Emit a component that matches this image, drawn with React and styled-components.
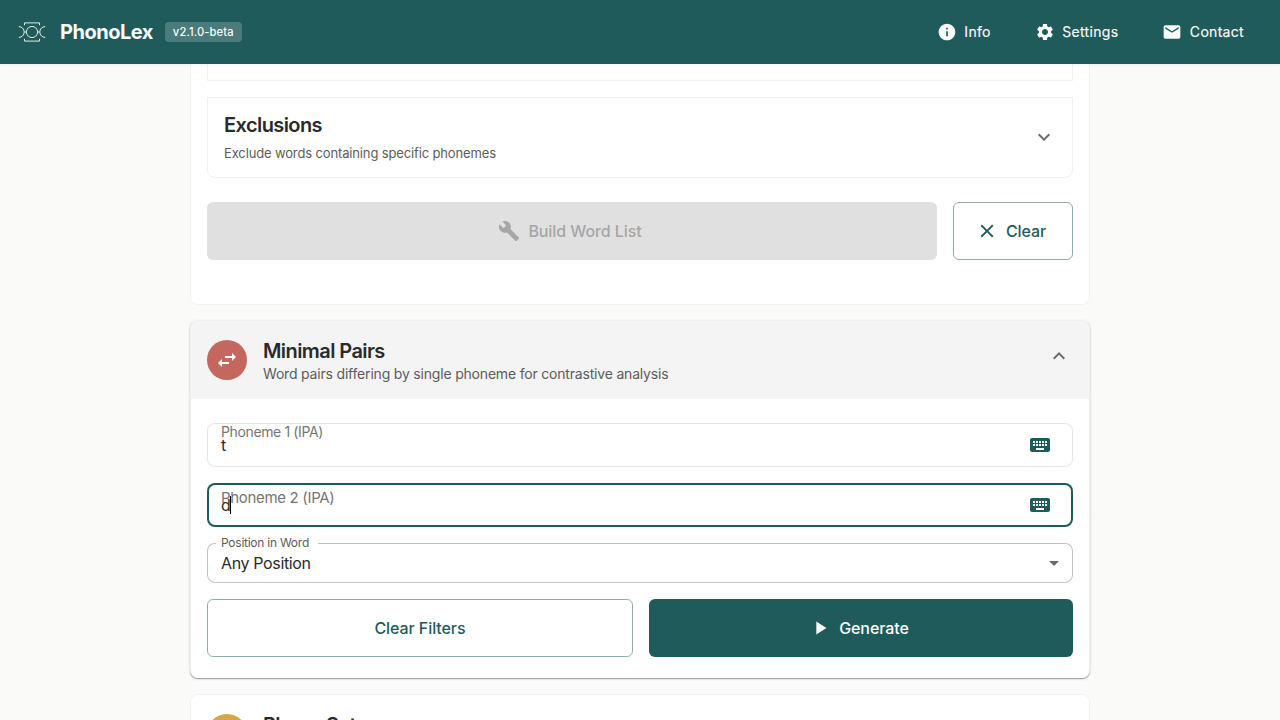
import React from "react";
import styled, { createGlobalStyle, css } from "styled-components";
import {
  MdInfo,
  MdSettings,
  MdEmail,
  MdBuild,
  MdClear,
  MdExpandMore,
  MdExpandLess,
  MdKeyboard,
  MdPlayArrow,
  MdArrowDropDown,
} from "react-icons/md";

const teal = "#1f5b5b";
const ink = "#2a2a2a";
const muted = "#5c5c5c";

const GlobalStyle = createGlobalStyle`
  *, *::before, *::after { box-sizing: border-box; }
  body {
    margin: 0;
    background: #fafaf8;
    color: ${ink};
    font-family: Inter, "Liberation Sans", sans-serif;
    -webkit-font-smoothing: antialiased;
  }
  button, input { font-family: inherit; }
`;

const Page = styled.div`
  height: 100vh;
  display: flex;
  flex-direction: column;
  overflow: hidden;
`;

const TopBar = styled.header`
  flex: none;
  height: 64px;
  padding: 0 20px 0 16px;
  display: flex;
  align-items: center;
  background: ${teal};
  color: #fafaf8;
  z-index: 1;
  box-shadow: 0 1px 3px rgba(0, 0, 0, 0.05);
`;

const Logo = styled.svg`
  width: 32px;
  height: 32px;
  margin-right: 12px;
  fill: none;
  stroke: currentColor;
  stroke-width: 1;
  opacity: 0.9;
`;

const Brand = styled.h1`
  margin: 0 12px 0 0;
  font-size: 20px;
  line-height: 32px;
  font-weight: 700;
  letter-spacing: -0.5px;
`;

const VersionChip = styled.span`
  height: 20px;
  padding: 0 8px;
  border-radius: 4px;
  background: rgba(255, 255, 255, 0.2);
  font-size: 11.2px;
  line-height: 20px;
  font-weight: 500;
  letter-spacing: 0.12px;
`;

const Nav = styled.nav`
  margin-left: auto;
  display: flex;
  gap: 12px;
`;

const NavButton = styled.button`
  display: flex;
  align-items: center;
  gap: 7.5px;
  padding: 6px 16px;
  border: 0;
  background: none;
  color: inherit;
  font-size: 14px;
  line-height: 24px;
  font-weight: 400;
  letter-spacing: 0.31px;
  -webkit-text-stroke: 0.15px currentColor;
  svg { font-size: 20px; }
`;

const Content = styled.main`
  flex: 1;
  min-height: 0;
  width: 900px;
  margin: 0 auto;
  display: flex;
  flex-direction: column;
`;

const Card = styled.section`
  flex: none;
  margin-top: ${(p) => p.$gap || 0};
  border: 1px solid #f2f2f1;
  border-radius: ${(p) => (p.$first ? "0 0 8px 8px" : "8px")};
  border-top-width: ${(p) => (p.$first ? 0 : "1px")};
  background: #fff;
  ${(p) =>
    p.$raised &&
    css`
      border-color: #f0f0f0;
      border-bottom: 0;
      box-shadow: 0 1px 3px rgba(0, 0, 0, 0.14), 0 1px 1px rgba(0, 0, 0, 0.3);
    `}
`;

const CardHeader = styled.div`
  height: 78px;
  padding: ${(p) => (p.$open ? "2px" : 0)} 16px 0;
  display: flex;
  align-items: center;
  border-radius: 7px 7px 0 0;
  background: ${(p) => (p.$open ? "#f4f4f4" : "#fff")};
`;

const RoundIcon = styled.span`
  flex: none;
  align-self: flex-start;
  width: 40px;
  height: 40px;
  margin: ${(p) => p.$top} 16px 0 0;
  border-radius: 50%;
  display: grid;
  place-items: center;
  background: ${(p) => p.$color};
  color: #fff;
  svg { display: block; width: 24px; height: 24px; fill: currentColor; }
`;

const Heading = styled.div`
  flex: 1;
`;

const Title = styled.h2`
  margin: 0;
  font-size: 20px;
  line-height: ${(p) => (p.$loose ? "32px" : "24px")};
  padding-bottom: ${(p) => p.$below || 0};
  font-weight: 600;
  letter-spacing: -0.58px;
`;

const Subtitle = styled.p`
  margin: 0;
  font-size: ${(p) => (p.$small ? "13px" : "14px")};
  line-height: ${(p) => (p.$small ? "20px" : "21px")};
  letter-spacing: ${(p) => (p.$small ? "-0.14px" : "-0.19px")};
  color: ${muted};
`;

const Chevron = styled.span`
  display: flex;
  align-self: ${(p) => (p.$high ? "flex-start" : "center")};
  margin: ${(p) => (p.$high ? "21px 2px 0 0" : "2px 0 0")};
  color: #6b6b6b;
  font-size: 24px;
`;

const CardBody = styled.div`
  padding: ${(p) => p.$pad};
`;

const PanelEnd = styled.div`
  height: 17px;
  margin-bottom: 16px;
  border: 1px solid #f1f1f1;
  border-top: 0;
`;

const Panel = styled.div`
  height: 81px;
  padding: 0 16px 4px;
  display: flex;
  align-items: center;
  border: 1px solid #f1f1f1;
  border-radius: 0 0 8px 8px;
`;

const Actions = styled.div`
  display: flex;
  gap: 16px;
  margin-top: ${(p) => p.$top};
`;

const Button = styled.button`
  flex: ${(p) => (p.$width ? "none" : 1)};
  width: ${(p) => p.$width || "auto"};
  height: 58px;
  padding: 0 16px;
  display: flex;
  align-items: center;
  justify-content: center;
  gap: 8px;
  border: 0;
  border-radius: 6px;
  font-size: 16px;
  font-weight: 500;
  letter-spacing: -0.08px;
  svg { font-size: 22px; margin-left: -4px; }
  ${(p) =>
    ({
      solid: css`background: ${teal}; color: #fafaf8;`,
      outline: css`
        border: 1px solid #8fadad;
        background: #fff;
        color: ${teal};
      `,
      disabled: css`background: #e0e0e0; color: #a6a6a6;`,
    })[p.$kind]}
`;

const Field = styled.div`
  position: relative;
  height: ${(p) => (p.$short ? "40px" : "44px")};
  margin-bottom: 16px;
  padding: 0 ${(p) => (p.$short ? "7px" : "21px")} 0 14px;
  display: flex;
  align-items: center;
  border-radius: 8px;
  box-shadow: inset 0 0 0 ${(p) => (p.$focused ? "2px" : "1px")} ${(p) => p.$line};
  font-size: 16px;
  svg { display: block; margin-left: auto; font-size: 24px; }
`;

const FieldLabel = styled.label`
  position: absolute;
  left: ${(p) => (p.$notch ? "9px" : "14px")};
  top: ${(p) => p.$top};
  padding: ${(p) => (p.$notch ? "0 9px 0 5px" : 0)};
  background: ${(p) => (p.$notch ? "#fff" : "none")};
  color: ${(p) => (p.$notch ? muted : "#757575")};
  font-size: ${(p) => p.$size};
  line-height: 18px;
  letter-spacing: ${(p) => p.$track};
  white-space: nowrap;
`;

const Value = styled.span`
  line-height: 24px;
  letter-spacing: -0.36px;
`;

const Caret = styled.span`
  width: 1px;
  height: 18px;
  background: #000;
`;

export default function App() {
  return (
    <Page>
      <GlobalStyle />
      <TopBar>
        <Logo viewBox="0 0 32 32">
          <circle cx="16" cy="16" r="5.6" />
          <path d="M8.500 9.200V6.900h15v2.300M8.500 22.800v2.300h15v-2.300" />
          <path d="M2.800 10.600C6 10.600 8.200 13 8.200 16s-2.200 5.400-5.400 5.400M29.200 10.600C26 10.600 23.800 13 23.800 16s2.200 5.400 5.400 5.400" />
          <path d="M8.200 16h2.200M21.600 16h2.200" />
        </Logo>
        <Brand>PhonoLex</Brand>
        <VersionChip>v2.1.0-beta</VersionChip>
        <Nav>
          <NavButton><MdInfo />Info</NavButton>
          <NavButton><MdSettings />Settings</NavButton>
          <NavButton><MdEmail />Contact</NavButton>
        </Nav>
      </TopBar>
      <Content>
        <Card $first>
          <CardBody $pad="0 16px 44px">
            <PanelEnd />
            <Panel>
              <Heading>
                <Title $loose $below="2px">Exclusions</Title>
                <Subtitle $small>Exclude words containing specific phonemes</Subtitle>
              </Heading>
              <Chevron><MdExpandMore /></Chevron>
            </Panel>
            <Actions $top="24px">
              <Button $kind="disabled" disabled><MdBuild />Build Word List</Button>
              <Button $kind="outline" $width="120px"><MdClear />Clear</Button>
            </Actions>
          </CardBody>
        </Card>
        <Card $raised $gap="15px">
          <CardHeader $open>
            <RoundIcon $color="#c4685f" $top="17px">
              <svg viewBox="0 0 24 24">
                <path d="M6.990 11 3 15l3.990 4v-3H14v-2H6.990zM21 9l-3.990-4v3H10v2h7.010v3z" />
              </svg>
            </RoundIcon>
            <Heading>
              <Title>Minimal Pairs</Title>
              <Subtitle>Word pairs differing by single phoneme for contrastive analysis</Subtitle>
            </Heading>
            <Chevron $high><MdExpandLess /></Chevron>
          </CardHeader>
          <CardBody $pad="24px 16px 21px">
            <Field $line="#e5e5e5">
              <FieldLabel $top="-0.5px" $size="14px" $track="-0.37px">Phoneme 1 (IPA)</FieldLabel>
              <Value>t</Value>
              <MdKeyboard color={teal} />
            </Field>
            <Field $line={teal} $focused>
              <FieldLabel $top="6px" $size="15px" $track="-0.32px">Phoneme 2 (IPA)</FieldLabel>
              <Value>d</Value>
              <Caret />
              <MdKeyboard color={teal} />
            </Field>
            <Field $line="#c2c2c2" $short>
              <FieldLabel $notch $top="-9px" $size="12px" $track="-0.25px">Position in Word</FieldLabel>
              <Value>Any Position</Value>
              <MdArrowDropDown color="#6b6b6b" />
            </Field>
            <Actions $top="0">
              <Button $kind="outline">Clear Filters</Button>
              <Button $kind="solid"><MdPlayArrow />Generate</Button>
            </Actions>
          </CardBody>
        </Card>
        <Card $gap="16px">
          <CardHeader>
            <RoundIcon $color="#d4a646" $top="19px" />
            <Heading>
              <Title $below="18px">Phone Sets</Title>
            </Heading>
          </CardHeader>
        </Card>
      </Content>
    </Page>
  );
}
